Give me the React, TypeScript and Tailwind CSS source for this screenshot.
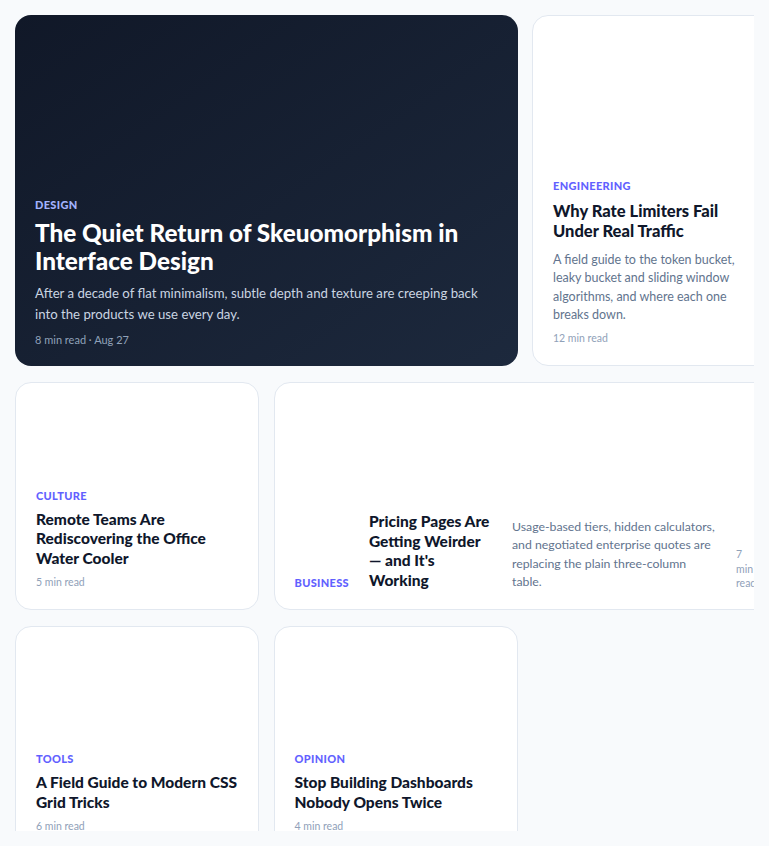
import React from "react";

type Post = {
  category: string;
  title: string;
  excerpt?: string;
  meta: string;
};

const rate: Post = {
  category: "Engineering",
  title: "Why Rate Limiters Fail Under Real Traffic",
  excerpt: "A field guide to the token bucket, leaky bucket and sliding window algorithms, and where each one breaks down.",
  meta: "12 min read",
};

const small: Post[] = [
  { category: "Culture", title: "Remote Teams Are Rediscovering the Office Water Cooler", meta: "5 min read" },
];

const business: Post = {
  category: "Business",
  title: "Pricing Pages Are Getting Weirder — and It's Working",
  excerpt: "Usage-based tiers, hidden calculators, and negotiated enterprise quotes are replacing the plain three-column table.",
  meta: "7 min read",
};

const bottom: Post[] = [
  { category: "Tools", title: "A Field Guide to Modern CSS Grid Tricks", meta: "6 min read" },
  { category: "Opinion", title: "Stop Building Dashboards Nobody Opens Twice", meta: "4 min read" },
];

function Category({ children, dark }: { children: React.ReactNode; dark?: boolean }) {
  return (
    <span
      className={`block shrink-0 text-[11px] font-black uppercase leading-[1.3] tracking-[0.03em] ${
        dark ? "text-indigo-300" : "text-indigo-500"
      }`}
    >
      {children}
    </span>
  );
}

function Card({ post, big }: { post: Post; big?: boolean }) {
  return (
    <article className="flex flex-col justify-end rounded-2xl border border-slate-200 bg-white px-5 pt-5 pb-[19px]">
      <Category>{post.category}</Category>
      <h3
        className={`mt-[7px] font-black text-slate-900 ${
          big ? "text-[16.5px] leading-[20px]" : "text-[15.5px] leading-[19.5px]"
        }`}
      >
        {post.title}
      </h3>
      {post.excerpt && (
        <p className="mt-2.5 text-[12.5px] leading-[18.4px] text-slate-500">{post.excerpt}</p>
      )}
      <span className="mt-2 text-[10.5px] leading-[1.3] text-slate-400">{post.meta}</span>
    </article>
  );
}

export default function App() {
  return (
    <div
      className="h-[846px] w-full bg-slate-50 p-[15px]"
      style={{ fontFamily: 'Lato, "Noto Sans", sans-serif' }}
    >
      <div className="h-full w-full overflow-hidden">
        <div className="grid w-[762px] grid-cols-[244px_244px_244px] grid-rows-[351px_228px_228px] gap-x-[14.5px] gap-y-4">
          <article className="col-span-2 flex flex-col justify-end rounded-2xl bg-gradient-to-br from-gray-900 to-slate-800 px-5 pt-5 pb-[19px]">
            <Category dark>Design</Category>
            <h2 className="mt-1.5 text-[24.3px] font-black leading-[28px] text-white">
              The Quiet Return of Skeuomorphism in Interface Design
            </h2>
            <p className="mt-2 text-[13.2px] leading-[21px] text-slate-300">
              After a decade of flat minimalism, subtle depth and texture are creeping back into the products we use every day.
            </p>
            <span className="mt-2 text-[11px] leading-[1.3] text-slate-400">8 min read · Aug 27</span>
          </article>

          <Card post={rate} big />

          {small.map((p) => (
            <Card key={p.title} post={p} />
          ))}

          <article className="col-span-2 flex flex-row items-end gap-5 rounded-2xl border border-slate-200 bg-white px-5 pt-5 pb-[19px]">
            <Category>{business.category}</Category>
            <h3 className="w-[123px] shrink-0 text-[15.5px] font-black leading-[19.5px] text-slate-900">
              {business.title}
            </h3>
            <p className="mb-[-2px] min-w-0 flex-1 text-[12.3px] leading-[18.6px] text-slate-500">{business.excerpt}</p>
            <span className="w-[19px] shrink-0 text-[10.5px] leading-[1.35] text-slate-400">{business.meta}</span>
          </article>

          {bottom.map((p) => (
            <Card key={p.title} post={p} />
          ))}
        </div>
      </div>
    </div>
  );
}
